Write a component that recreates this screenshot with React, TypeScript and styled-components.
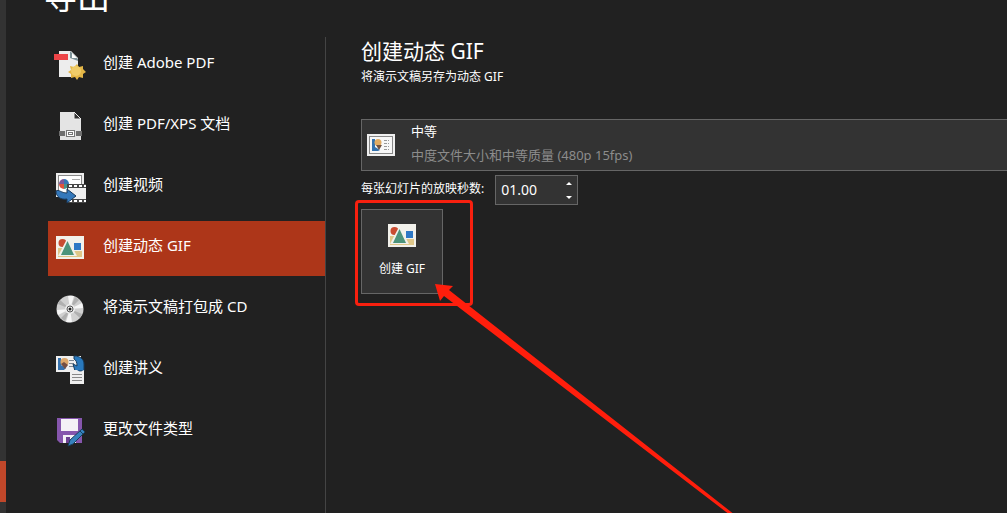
import React, { useState } from 'react';
import styled, { createGlobalStyle } from 'styled-components';

const GlobalStyle = createGlobalStyle`
  * { box-sizing: border-box; }
  body {
    margin: 0;
    background: #212121;
    color: #fff;
    font-family: "Noto Sans", "Noto Sans CJK SC", sans-serif;
  }
  button, input { font-family: inherit; color: inherit; }
`;

const Page = styled.div`
  display: flex;
  height: 100vh;
  overflow: hidden;
`;

const Rail = styled.div`
  flex: 0 0 6px;
  background: #333;
  padding-top: 461px;
`;

const RailMarker = styled.div`
  height: 41px;
  background: #c0472a;
`;

const Backstage = styled.main`
  flex: 1;
  min-width: 0;
  display: flex;
  flex-direction: column;
  padding-left: 42px;
`;

const PageTitle = styled.h1`
  margin: -27px 0 16px -4px;
  font-size: 33px;
  line-height: 48px;
  font-weight: 400;
`;

const Columns = styled.div`
  flex: 1;
  display: flex;
  min-height: 0;
`;

const Nav = styled.nav`
  flex: 0 0 278px;
  display: flex;
  flex-direction: column;
  gap: 6px;
  padding-top: 1px;
  border-right: 1px solid #444;
`;

const NavItem = styled.button<{ $active?: boolean }>`
  display: flex;
  align-items: center;
  gap: 17px;
  height: 55px;
  flex-shrink: 0;
  padding: 0 0 0 6px;
  border: 0;
  background: ${(p) => (p.$active ? '#ad3619' : 'transparent')};
  text-align: left;
  cursor: pointer;
`;

const NavLabel = styled.span`
  font-size: 15px;
  line-height: 20px;
  padding-bottom: 8px;
`;

const Content = styled.section`
  flex: 1;
  min-width: 0;
  padding-left: 35px;
`;

const Heading = styled.h2`
  margin: 0;
  font-size: 21px;
  line-height: 28px;
  font-weight: 400;
`;

const Subtitle = styled.p`
  margin: 3px 0 33px;
  font-size: 12px;
  line-height: 18px;
`;

const QualityOption = styled.button`
  display: flex;
  align-items: center;
  gap: 16px;
  width: calc(100% + 1px);
  height: 52px;
  padding: 0 5px;
  border: 1px solid #666;
  background: #333;
  text-align: left;
  cursor: pointer;
`;

const QualityText = styled.span`
  display: grid;
  gap: 4px;
  font-size: 13px;
  line-height: 20px;
  padding-bottom: 4px;
`;

const Muted = styled.span`
  color: #8c8c8c;
`;

const SecondsRow = styled.div`
  display: flex;
  gap: 11px;
  margin-top: 4px;
  height: 30px;
`;

const SecondsLabel = styled.label`
  font-size: 12px;
  line-height: 28px;
  white-space: nowrap;
`;

const Spinner = styled.div`
  display: flex;
  width: 83px;
  border: 1px solid #666;
  background: #333;
`;

const SpinnerInput = styled.input`
  flex: 1;
  min-width: 0;
  padding: 0 0 2px 5px;
  border: 0;
  background: transparent;
  font-size: 14px;
  outline: none;
`;

const SpinnerSteps = styled.div`
  display: grid;
  grid-template-rows: 1fr 1fr;
  width: 16px;
`;

const Step = styled.button`
  display: grid;
  place-items: center;
  padding: 0;
  border: 0;
  background: transparent;
`;

const Action = styled.div`
  position: relative;
  width: 82px;
  margin-top: 4px;
`;

const ActionButton = styled.button`
  display: flex;
  flex-direction: column;
  align-items: center;
  gap: 13px;
  width: 100%;
  height: 85px;
  padding: 14px 0 0;
  border: 1px solid #666;
  background: #333;
  font-size: 12px;
  line-height: 18px;
  cursor: pointer;
`;

const HighlightFrame = styled.div`
  position: absolute;
  left: -6px;
  top: -9px;
  width: 118px;
  height: 106px;
  border: 3px solid #f8200f;
  border-radius: 4px;
  pointer-events: none;
`;

const PointerArrow = styled.svg`
  position: absolute;
  left: 74px;
  top: 75px;
  pointer-events: none;
`;

const IconSvg = ({ children }: { children: React.ReactNode }) => (
  <svg width="32" height="33" viewBox="0 0 32 33" aria-hidden="true">{children}</svg>
);

const AdobePdfIcon = () => (
  <IconSvg>
    <path d="M5 2h12l7 7v19H5z" fill="#ededed" />
    <path d="M16 2l8 8v2l-8-3z" fill="#7e9298" />
    <path d="M18 4l5 5h-5z" fill="#fff" />
    <rect y="5" width="14" height="6" fill="#ed4548" />
    <path d="M23 15l2 3 4-1v3l3 3-3 2v4l-4-1-2 3-2-3-4 1v-4l-3-2 3-2-1-4 4 1z" fill="#e5b747" />
    <circle cx="22" cy="22" r="5" fill="#f0cc68" />
  </IconSvg>
);

const PdfXpsIcon = () => (
  <IconSvg>
    <path d="M6 2h14l7 7v21H6z" fill="#e4e4e4" />
    <path d="M20 2l7 7h-7z" fill="#333" stroke="#ededed" />
    <path d="M5 21h6v5H5zM22 21h6v5h-6z" fill="#6f6f6f" />
    <rect x="11" y="20" width="11" height="7" fill="#dedede" />
    <rect x="12.5" y="20.5" width="8" height="6" fill="#fff" stroke="#777" />
    <rect x="14.5" y="22.5" width="4" height="2" fill="#fff" stroke="#777" />
  </IconSvg>
);

const VideoIcon = () => (
  <IconSvg>
    <rect x="2" y="2" width="28" height="24" fill="#ededed" />
    <rect x="4.5" y="4.5" width="23" height="19" fill="#fff" stroke="#888" />
    <path d="M10 8a5 5 0 0 0-5 5h5z" fill="#7d5799" />
    <path d="M10 8a5 5 0 0 1 5 5h-5z" fill="#3578b4" />
    <path d="M15 13a5 5 0 0 1-5 5v-5z" fill="#45928a" />
    <path d="M5 13a5 5 0 0 0 5 5v-5z" fill="#df543c" />
    <path d="M18 8.500h8" stroke="#aaa" />
    <rect x="13" y="13" width="19" height="19" fill="#474747" />
    <path d="M15 15h17M15 30h17" stroke="#fff" strokeWidth="2" strokeDasharray="3 2" />
    <rect x="14" y="17" width="18" height="11" fill="#f0f0f0" />
    <path d="M2 20c3-2 5 2 11 2v-4l9 7-9 7v-4C7 29 2 26 2 20z" fill="#3478bb" stroke="#18395b" />
  </IconSvg>
);

const Picture = () => (
  <>
    <rect width="28" height="23" fill="#f2f1eb" />
    <path d="M2 12h24v9H2z" fill="#dfc789" />
    <circle cx="6.5" cy="7" r="4" fill="#c94c31" />
    <rect x="17" y="6" width="9" height="9" fill="#f2f1eb" />
    <rect x="18" y="7" width="7" height="7" fill="#2e78c5" />
    <path d="M11.500 2L21 20H2z" fill="#f2f1eb" />
    <path d="M11.500 5L18 19H5z" fill="#4c947b" />
  </>
);

const GifIcon = () => (
  <IconSvg>
    <g transform="translate(2 4)"><Picture /></g>
  </IconSvg>
);

const DiscIcon = () => (
  <IconSvg>
    <circle cx="16" cy="16" r="13.5" fill="#d0d0d0" />
    <path d="M16 16L14 3a13 13 0 0 1 6 0zM16 16l12-6a13 13 0 0 1 1 5zM16 16l2 13a13 13 0 0 1-6 0zM16 16L4 22a13 13 0 0 1-1-5z" fill="#f6f6f6" />
    <path d="M16 16l5-12 4 3zM16 16L6 7l-2 4zM16 16l-5 12-4-3zM16 16l10 9 2-4z" fill="#b0b0b0" />
    <circle cx="16" cy="16" r="5" fill="#ececec" />
    <circle cx="16" cy="16" r="3" fill="#f5f5f5" stroke="#555" />
    <circle cx="16" cy="16" r="1.5" fill="#222" />
  </IconSvg>
);

const HandoutIcon = () => (
  <IconSvg>
    <rect x="2" y="2" width="25" height="16" fill="#efefef" />
    <path d="M4 4h3v7l5 3-2 2H4z" fill="#3672ae" />
    <circle cx="10.5" cy="8" r="4" fill="#dda86b" />
    <path d="M7 10l3-2 4 3-3 4z" fill="#754f43" />
    <path d="M15 6.500h5M15 9.500h5M15 12.500h5" stroke="#7b8793" />
    <path d="M20 2c6 0 10 3 10 8v7h-9l-2-7 4 2c0-4-1-6-3-7z" fill="#2979bd" stroke="#163b5c" />
    <path d="M16 16h7l3 2 4-2v14H16z" fill="#efefef" />
    <path d="M18 20.500h10M18 23.500h10M18 26.500h10" stroke="#888" />
  </IconSvg>
);

const FileTypeIcon = () => (
  <IconSvg>
    <path d="M3 3h25v25H6l-3-3z" fill="#8656ad" />
    <path d="M7 4h17v12H7z" fill="#f4f1f6" />
    <path d="M9 20h13v8H9z" fill="#f4f1f6" />
    <path d="M12 22h4v6h-4z" fill="#6c4192" />
    <path d="M14 31l2-6 12-11 3 3-12 12z" fill="#3682bd" stroke="#193f5d" />
    <path d="M26 16l3 3" stroke="#193f5d" />
  </IconSvg>
);

const SlideIcon = () => (
  <svg width="28" height="22" viewBox="0 0 28 22" aria-hidden="true">
    <rect width="28" height="22" fill="#f0f0f0" />
    <rect x="2.5" y="2.5" width="23" height="17" fill="#f7f7f7" stroke="#888" />
    <path d="M5 5h3v8l5 3-2 1H5z" fill="#3472ae" />
    <circle cx="11" cy="8.5" r="3.5" fill="#e1ab62" />
    <path d="M9 11h6l-3 5z" fill="#71513f" />
    <path d="M17 6.500h5M17 9.500h5M17 12.500h5M17 15.500h5" stroke="#999" strokeDasharray="3 1" />
  </svg>
);

const ITEMS = [
  { label: '创建 Adobe PDF', Icon: AdobePdfIcon },
  { label: '创建 PDF/XPS 文档', Icon: PdfXpsIcon },
  { label: '创建视频', Icon: VideoIcon },
  { label: '创建动态 GIF', Icon: GifIcon },
  { label: '将演示文稿打包成 CD', Icon: DiscIcon },
  { label: '创建讲义', Icon: HandoutIcon },
  { label: '更改文件类型', Icon: FileTypeIcon },
];

export default function App() {
  const [active, setActive] = useState(3);
  const [seconds, setSeconds] = useState('01.00');
  const step = (delta: number) =>
    setSeconds((s) => Math.max(0, (parseFloat(s) || 0) + delta).toFixed(2).padStart(5, '0'));

  return (
    <Page>
      <GlobalStyle />
      <Rail><RailMarker /></Rail>
      <Backstage>
        <PageTitle>导出</PageTitle>
        <Columns>
          <Nav>
            {ITEMS.map(({ label, Icon }, i) => (
              <NavItem key={label} $active={i === active} onClick={() => setActive(i)}>
                <Icon />
                <NavLabel>{label}</NavLabel>
              </NavItem>
            ))}
          </Nav>
          <Content>
            <Heading>创建动态 GIF</Heading>
            <Subtitle>将演示文稿另存为动态 GIF</Subtitle>
            <QualityOption>
              <SlideIcon />
              <QualityText>
                <span>中等</span>
                <Muted>中度文件大小和中等质量 (480p 15fps)</Muted>
              </QualityText>
            </QualityOption>
            <SecondsRow>
              <SecondsLabel htmlFor="seconds">每张幻灯片的放映秒数:</SecondsLabel>
              <Spinner>
                <SpinnerInput id="seconds" value={seconds} onChange={(e) => setSeconds(e.target.value)} />
                <SpinnerSteps>
                  <Step aria-label="增加" onClick={() => step(0.25)}>
                    <svg width="6" height="3" viewBox="0 0 6 3"><path d="M0 3l3-3 3 3z" fill="#fff" /></svg>
                  </Step>
                  <Step aria-label="减少" onClick={() => step(-0.25)}>
                    <svg width="6" height="3" viewBox="0 0 6 3"><path d="M0 0l3 3 3-3z" fill="#fff" /></svg>
                  </Step>
                </SpinnerSteps>
              </Spinner>
            </SecondsRow>
            <Action>
              <ActionButton>
                <svg width="28" height="23" viewBox="0 0 28 23" aria-hidden="true"><Picture /></svg>
                创建 GIF
              </ActionButton>
              <HighlightFrame />
              <PointerArrow width="300" height="232" viewBox="0 0 300 232" aria-hidden="true">
                <path d="M0 0L18 2L14 6L300 231L295 231L9 12L5 17Z" fill="#ff1e0c" />
              </PointerArrow>
            </Action>
          </Content>
        </Columns>
      </Backstage>
    </Page>
  );
}
